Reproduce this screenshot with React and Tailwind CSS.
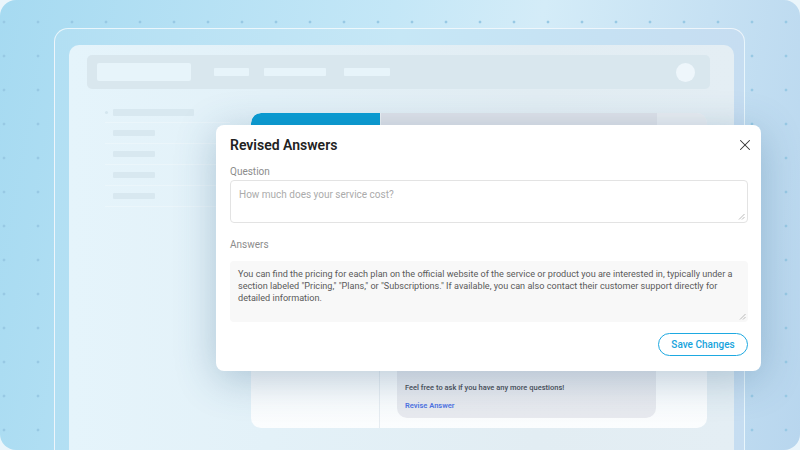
import { X } from 'lucide-react'

const SIDE_BARS = [81, 42, 42, 42, 42]

/* little resize grip in the corner of a textarea */
function Grip() {
  return (
    <svg width="7" height="7" viewBox="0 0 7 7" className="absolute right-[2px] bottom-[2px]">
      <path d="M6.5 1 L1 6.5 M6.5 4 L4 6.5" stroke="#a8a8a8" strokeWidth="0.8" fill="none" />
    </svg>
  )
}

export default function App() {
  return (
    <div className="w-[800px] h-[450px] overflow-hidden bg-[#eaf5fb] font-['Roboto',sans-serif]">
      <div className="relative w-full h-full overflow-hidden rounded-[16px] bg-[linear-gradient(100deg,#a6daf1_0%,#c4e7f7_45%,#d4ecf8_62%,#b8d6ee_100%)]">
        {/* dot grid */}
        <div className="absolute inset-0 bg-[radial-gradient(circle,#98c9e4_1.2px,transparent_1.7px)] bg-[length:34px_34px] bg-[position:-13px_5px]" />

        {/* outer frame */}
        <div className="relative h-full pl-[54px] pr-[55px] pt-[28px]">
          <div className="h-[440px] rounded-[14px] border border-white/70 bg-[linear-gradient(90deg,#b2dff3_0%,#c6e7f6_50%,#c6ddf1_100%)] pl-[14px] pr-[10px] pt-[16px]">
            {/* app window */}
            <div className="flex h-full flex-col rounded-t-[10px] bg-[linear-gradient(90deg,#e5f4fb_0%,#e3f1f8_30%,#e2edf3_70%,#e4eef4_100%)]">
              {/* top bar */}
              <div className="pl-[18px] pr-[24px] pt-[10px]">
                <div className="flex h-[34px] items-center rounded-[5px] bg-[#d9e7ee] pl-[10px] pr-[15px]">
                  <div className="h-[18px] w-[94px] rounded-[2px] bg-[#e7f4fa]" />
                  <div className="ml-[23px] h-[8px] w-[35px] rounded-[1px] bg-[#e7f4fa]" />
                  <div className="ml-[15px] h-[8px] w-[62px] rounded-[1px] bg-[#e7f4fa]" />
                  <div className="ml-[18px] h-[8px] w-[46px] rounded-[1px] bg-[#e7f4fa]" />
                  <div className="ml-auto h-[19px] w-[19px] rounded-full bg-[#eef6fb]" />
                </div>
              </div>

              <div className="flex flex-1">
                {/* sidebar */}
                <div className="w-[161px] pt-[13px] pl-[36px]">
                  {SIDE_BARS.map((w, i) => (
                    <div key={i} className="flex h-[21px] items-center border-b border-white/25">
                      <div className={`mr-[5px] h-[3px] w-[3px] rounded-full ${i === 0 ? 'bg-[#d4e6ef]' : 'bg-transparent'}`} />
                      <div
                        className={`${i === 0 ? 'h-[7px]' : 'h-[6px]'} rounded-[1px] bg-[#d8e8f0]`}
                        style={{ width: w }}
                      />
                    </div>
                  ))}
                </div>

                {/* content */}
                <div className="flex-1 pl-[21px] pr-[27px] pt-[24px]">
                  <div className="flex h-[315px] flex-col overflow-hidden rounded-[10px] bg-[linear-gradient(180deg,#eef2f6_0%,#f4f7fa_60%,#fbfdfe_100%)]">
                    <div className="flex h-[30px]">
                      <div className="w-[129px] rounded-tl-[10px] bg-[#0a9dd4]" />
                      <div className="w-[1px]" />
                      <div className="flex-1 bg-[#dfe2e9]" />
                      <div className="w-[50px] rounded-tr-[10px] bg-[#e9edf2]" />
                    </div>
                    <div className="flex flex-1">
                      <div className="w-[129px] border-r border-[#e6ecf1]" />
                      <div className="flex flex-1 pb-[10px] pl-[17px]">
                        <div className="flex w-[259px] flex-col justify-end rounded-b-[10px] bg-[linear-gradient(180deg,#e4e6ec_0%,#e8eaef_100%)] pb-[6px] pl-[8px]">
                          <p className="text-[7.5px] leading-[12px] font-medium text-[#4a4d55]">
                            Feel free to ask if you have any more questions!
                          </p>
                          <p className="mt-[6px] text-[7.5px] leading-[12px] font-semibold text-[#4f73e3]">
                            Revise Answer
                          </p>
                        </div>
                      </div>
                    </div>
                  </div>
                </div>
              </div>
            </div>
          </div>
        </div>

        {/* modal */}
        <div className="absolute left-[216px] top-[125px] h-[246px] w-[545px] rounded-[8px] bg-white pl-[14px] pr-[13px] pt-[10px] shadow-[0_8px_40px_rgba(40,90,130,0.3)]">
          <h2 className="text-[14px] leading-[20px] font-semibold text-[#222]">Revised Answers</h2>
          <button className="absolute right-[7px] top-[11px] text-[#333]">
            <X size={18} strokeWidth={1.4} />
          </button>

          <p className="mt-[10px] text-[10px] leading-[14px] text-[#8c8c8c]">Question</p>
          <div className="relative mt-[1px] h-[43px] rounded-[4px] border border-[#e3e3e3] px-[8px] pt-[7px] text-[10px] leading-[14px] text-[#ababab]">
            How much does your service cost?
            <Grip />
          </div>

          <p className="mt-[15px] text-[10px] leading-[14px] text-[#8c8c8c]">Answers</p>
          <div className="relative mt-[9px] h-[61px] rounded-[4px] bg-[#f8f8f8] pl-[8px] pt-[7px] text-[9.1px] leading-[12px] text-[#5a5a5a] whitespace-nowrap">
            You can find the pricing for each plan on the official website of the service or product you are interested in, typically under a
            <br />
            section labeled "Pricing," "Plans," or "Subscriptions." If available, you can also contact their customer support directly for
            <br />
            detailed information.
            <Grip />
          </div>

          <div className="mt-[11px] flex justify-end">
            <button className="h-[23px] w-[90px] rounded-full border-[1.5px] border-[#1ea9e1] text-[10px] font-medium text-[#17a3dc]">
              Save Changes
            </button>
          </div>
        </div>
      </div>
    </div>
  )
}
